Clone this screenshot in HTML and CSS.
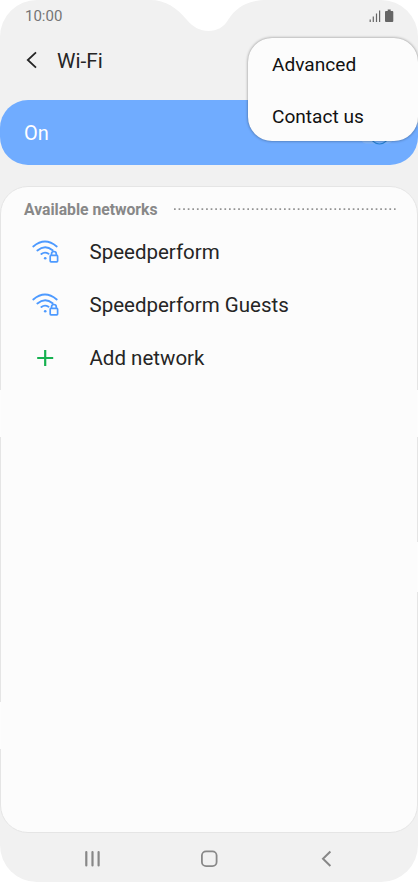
FILE: index.html
```html
<!DOCTYPE html>
<html lang="en">
<head>
<meta charset="utf-8">
<title>Wi-Fi</title>
<link rel="stylesheet" href="styles.css">
</head>
<body>
<div class="phone">
  <svg class="notch" width="120" height="32" viewBox="0 0 120 32"><path d="M1 0C17 0 28 8 38 20C44 27 51 31 59.5 31S75 27 79 20C87 7 99 0 118 0Z" fill="#fff"/></svg>
  <header class="status">
    <span class="time">10:00</span>
    <svg class="indicators" width="26" height="14" viewBox="0 0 26 14">
      <path d="M1.2 13v-2.5M4.3 13V7.5M7.5 13V4.5M10.6 13V1.5" stroke="#666" stroke-width="1.2"/>
      <path d="M16 3q0-1 1-1h1.7V.5h3V2h1.6q1 0 1 1v9q0 1-1 1H17q-1 0-1-1z" fill="#666"/>
    </svg>
  </header>
  <div class="titlebar">
    <svg class="back" width="12" height="18" viewBox="0 0 12 18"><path d="M10 1.3L1.8 9L10 16.7" fill="none" stroke="#252525" stroke-width="1.8"/></svg>
    <h1>Wi-Fi</h1>
  </div>
  <div class="switchbar">
    <span class="state">On</span>
    <svg class="toggle" width="36" height="20" viewBox="0 0 36 20"><rect x="1" y="1" width="32" height="17.5" rx="5" fill="#86b8fa"/><circle cx="19.5" cy="10" r="9" fill="#7bb4ff" stroke="#2680d2" stroke-width="1.2"/></svg>
  </div>
  <main class="card">
    <div class="section">
      <h2>Available networks</h2>
      <svg class="dots" width="223" height="3" viewBox="0 0 223 3"><path d="M1 1.2H222.6" stroke="#929292" stroke-width="1.7" stroke-dasharray="1.7 2.883"/></svg>
    </div>
    <ul class="networks">
      <li>
        <svg class="wifi" width="28" height="24" viewBox="0 0 28 24" fill="none" stroke="#4d9aff" stroke-width="1.9" stroke-linecap="round"><path d="M1.3 6.4Q13 -3.4 24.7 6.4M5.4 10.5Q13 4.1 20.6 10.3M9.4 14Q12.8 11.4 16.5 13.8"/><rect x="18.2" y="15.4" width="7.4" height="6.5" rx=".8" stroke-width="1.7"/><path d="M19.5 15v-1.1a2.4 2.4 0 0 1 4.8 0V15" stroke-width="1.7"/><circle cx="13.2" cy="18.3" r="1.3" fill="#4d9aff" stroke="none"/></svg>
        <span>Speedperform</span>
      </li>
      <li>
        <svg class="wifi" width="28" height="24" viewBox="0 0 28 24" fill="none" stroke="#4d9aff" stroke-width="1.9" stroke-linecap="round"><path d="M1.3 6.4Q13 -3.4 24.7 6.4M5.4 10.5Q13 4.1 20.6 10.3M9.4 14Q12.8 11.4 16.5 13.8"/><rect x="18.2" y="15.4" width="7.4" height="6.5" rx=".8" stroke-width="1.7"/><path d="M19.5 15v-1.1a2.4 2.4 0 0 1 4.8 0V15" stroke-width="1.7"/><circle cx="13.2" cy="18.3" r="1.3" fill="#4d9aff" stroke="none"/></svg>
        <span>Speedperform Guests</span>
      </li>
      <li>
        <svg class="plus" width="28" height="24" viewBox="0 0 28 24"><path d="M5.2 12H21.2M13.2 4V20" stroke="#16b150" stroke-width="2.2"/></svg>
        <span>Add network</span>
      </li>
    </ul>
  </main>
  <nav class="navbar">
    <svg width="18" height="18" viewBox="0 0 18 18"><path d="M3.3 2v13.5M9.5 2v13.5M15.6 2v13.5" stroke="#888" stroke-width="2.2" stroke-linecap="round"/></svg>
    <svg width="18" height="18" viewBox="0 0 18 18"><rect x="1.9" y="1.3" width="14.7" height="14.9" rx="4.2" fill="none" stroke="#888" stroke-width="1.8"/></svg>
    <svg width="18" height="18" viewBox="0 0 18 18"><path d="M13.4 1.5L6 8.8L13.4 16" fill="none" stroke="#888" stroke-width="2"/></svg>
  </nav>
  <div class="menu">
    <span>Advanced</span>
    <span>Contact us</span>
  </div>
  <i class="gap gap-left-top"></i>
  <i class="gap gap-left-bottom"></i>
  <i class="gap gap-right-top"></i>
  <i class="gap gap-right-bottom"></i>
</div>
</body>
</html>
```
FILE: styles.css
```css
* { box-sizing: border-box; }
body { margin: 0; background: #fff; font-family: Roboto, sans-serif; color: #252525; }
svg { display: block; flex: none; }
h1, h2, ul { margin: 0; padding: 0; }
.phone {
  position: relative;
  display: flex;
  flex-direction: column;
  width: 418px;
  height: 882px;
  background: #f1f1f1;
  border-radius: 37px;
  overflow: hidden;
}
.notch { position: absolute; left: 149px; top: 0; }
.status {
  display: flex;
  justify-content: space-between;
  height: 34px;
  padding: 9px 23px 0 25px;
}
.time { font-size: 15px; line-height: 15px; color: #757575; }
.titlebar { display: flex; align-items: center; height: 52px; gap: 19px; padding-left: 26px; }
.titlebar h1 { padding-top: 1px; font-size: 20.8px; line-height: 24px; font-weight: 400; }
.switchbar {
  display: flex;
  align-items: center;
  justify-content: space-between;
  height: 65px;
  margin-top: 14px;
  padding: 0 22px 0 24px;
  background: #70acff;
  border-radius: 28px;
}
.state { color: #fff; font-size: 20px; }
.toggle { margin-top: 4px; }
.card {
  height: 647px;
  margin-top: 21px;
  background: #fcfcfc;
  border: 1px solid #e5e5e5;
  border-radius: 28px;
}
.section { display: flex; align-items: center; gap: 16px; height: 38px; padding: 6px 0 0 23px; }
.section h2 { width: 133px; font-size: 15.7px; font-weight: 700; color: #888; white-space: nowrap; }
.networks { list-style: none; }
.networks li {
  display: flex;
  align-items: center;
  gap: 30px;
  height: 53px;
  padding-left: 30.5px;
  font-size: 20.5px;
}
.navbar {
  display: flex;
  justify-content: space-between;
  padding: 17px 83px 0;
}
.menu {
  position: absolute;
  left: 248px;
  top: 38px;
  width: 170px;
  height: 103px;
  padding: 0 24px;
  background: #fcfcfc;
  border-radius: 24px;
  box-shadow: 0 0 3px rgba(0, 0, 0, .45);
  color: #111;
  font-size: 19.1px;
}
.menu span { display: block; height: 52px; line-height: 53px; white-space: nowrap; }
.gap { position: absolute; width: 1px; height: 47px; background: #fdfdfd; }
.gap-left-top { left: 0; top: 390px; }
.gap-left-bottom { left: 0; top: 702px; }
.gap-right-top { right: 0; top: 390px; }
.gap-right-bottom { right: 0; top: 542px; height: 50px; }
```
